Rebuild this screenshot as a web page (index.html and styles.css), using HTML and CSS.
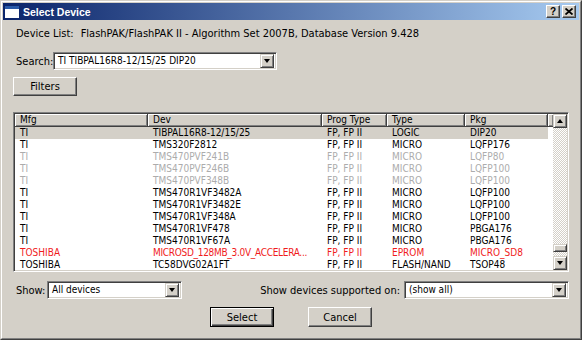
FILE: index.html
```html
<!DOCTYPE html>
<html>
<head>
<meta charset="utf-8">
<title>Select Device</title>
<link rel="stylesheet" href="styles.css">
</head>
<body>
<div class="window">
  <div class="frame">
    <div class="titlebar">
      <svg class="app-icon" width="14" height="12" viewBox="0 0 14 12">
        <rect x="0" y="0" width="14" height="12" fill="#ffffff"/>
        <rect x="0" y="0" width="14" height="3" fill="#2a5aa8"/>
      </svg>
      <span class="title">Select Device</span>
      <div class="caption-buttons">
        <div class="cap-btn help">?</div>
        <div class="cap-btn">
          <svg width="8" height="7" viewBox="0 0 8 7">
            <path d="M0.5 0.5 L7.5 6.5 M7.5 0.5 L0.5 6.5" stroke="#000" stroke-width="1.8" fill="none"/>
          </svg>
        </div>
      </div>
    </div>
    <div class="content">
      <div class="info"><span class="label">Device List:</span><span class="info-value">FlashPAK/FlashPAK II - Algorithm Set 2007B, Database Version 9.428</span></div>
      <div class="search-row">
        <span class="label search-label">Search:</span>
        <div class="combo search-combo">
          <span class="combo-text">TI TIBPAL16R8-12/15/25 DIP20</span>
          <span class="combo-btn"><i class="tri-down"></i></span>
        </div>
      </div>
      <div class="filters-row"><div class="btn filters">Filters</div></div>
      <div class="list">
        <div class="list-main">
          <div class="header">
            <div class="hcell c-mfg">Mfg</div>
            <div class="hcell c-dev">Dev</div>
            <div class="hcell c-prog">Prog Type</div>
            <div class="hcell c-type">Type</div>
            <div class="hcell c-pkg">Pkg</div>
            <div class="hcell c-fill"></div>
          </div>
          <div class="rows">
            <div class="row selected"><span class="c-mfg">TI</span><span class="c-dev">TIBPAL16R8-12/15/25</span><span class="c-prog">FP, FP II</span><span class="c-type">LOGIC</span><span class="c-pkg">DIP20</span></div>
            <div class="row"><span class="c-mfg">TI</span><span class="c-dev">TMS320F2812</span><span class="c-prog">FP, FP II</span><span class="c-type">MICRO</span><span class="c-pkg">LQFP176</span></div>
            <div class="row disabled"><span class="c-mfg">TI</span><span class="c-dev">TMS470PVF241B</span><span class="c-prog">FP, FP II</span><span class="c-type">MICRO</span><span class="c-pkg">LQFP80</span></div>
            <div class="row disabled"><span class="c-mfg">TI</span><span class="c-dev">TMS470PVF246B</span><span class="c-prog">FP, FP II</span><span class="c-type">MICRO</span><span class="c-pkg">LQFP100</span></div>
            <div class="row disabled"><span class="c-mfg">TI</span><span class="c-dev">TMS470PVF348B</span><span class="c-prog">FP, FP II</span><span class="c-type">MICRO</span><span class="c-pkg">LQFP100</span></div>
            <div class="row"><span class="c-mfg">TI</span><span class="c-dev">TMS470R1VF3482A</span><span class="c-prog">FP, FP II</span><span class="c-type">MICRO</span><span class="c-pkg">LQFP100</span></div>
            <div class="row"><span class="c-mfg">TI</span><span class="c-dev">TMS470R1VF3482E</span><span class="c-prog">FP, FP II</span><span class="c-type">MICRO</span><span class="c-pkg">LQFP100</span></div>
            <div class="row"><span class="c-mfg">TI</span><span class="c-dev">TMS470R1VF348A</span><span class="c-prog">FP, FP II</span><span class="c-type">MICRO</span><span class="c-pkg">LQFP100</span></div>
            <div class="row"><span class="c-mfg">TI</span><span class="c-dev">TMS470R1VF478</span><span class="c-prog">FP, FP II</span><span class="c-type">MICRO</span><span class="c-pkg">PBGA176</span></div>
            <div class="row"><span class="c-mfg">TI</span><span class="c-dev">TMS470R1VF67A</span><span class="c-prog">FP, FP II</span><span class="c-type">MICRO</span><span class="c-pkg">PBGA176</span></div>
            <div class="row warn"><span class="c-mfg">TOSHIBA</span><span class="c-dev tight">MICROSD_128MB_3.0V_ACCELERA...</span><span class="c-prog">FP, FP II</span><span class="c-type">EPROM</span><span class="c-pkg">MICRO_SD8</span></div>
            <div class="row last"><span class="c-mfg">TOSHIBA</span><span class="c-dev">TC58DVG02A1FT</span><span class="c-prog">FP, FP II</span><span class="c-type">FLASH/NAND</span><span class="c-pkg">TSOP48</span></div>
          </div>
        </div>
        <div class="vscroll">
          <div class="sb-btn"><i class="tri-up"></i></div>
          <div class="sb-track"><div class="sb-thumb"></div></div>
          <div class="sb-btn"><i class="tri-down"></i></div>
        </div>
      </div>
      <div class="bottom-row">
        <span class="label show-label">Show:</span>
        <div class="combo show-combo">
          <span class="combo-text">All devices</span>
          <span class="combo-btn"><i class="tri-down"></i></span>
        </div>
        <div class="supported">
          <span class="label">Show devices supported on:</span>
          <div class="combo supported-combo">
            <span class="combo-text">(show all)</span>
            <span class="combo-btn"><i class="tri-down"></i></span>
          </div>
        </div>
      </div>
      <div class="actions">
        <div class="btn default">Select</div>
        <div class="btn">Cancel</div>
      </div>
    </div>
  </div>
</div>
</body>
</html>
```

FILE: styles.css
```css
* { box-sizing: border-box; }
html, body { margin: 0; padding: 0; background: #d4d0c8; }
body {
  font-family: "DejaVu Sans Condensed", "Liberation Sans", sans-serif;
  font-size: 11px;
  color: #000;
}
.window {
  width: 582px;
  height: 340px;
  background: #d4d0c8;
  border: 1px solid;
  border-color: #d4d0c8 #404040 #404040 #d4d0c8;
}
.frame {
  height: 100%;
  border: 1px solid;
  border-color: #ffffff #808080 #808080 #ffffff;
  padding: 1px;
  display: flex;
  flex-direction: column;
}
.titlebar {
  height: 17px;
  flex: none;
  display: flex;
  align-items: center;
  padding: 0 3px 0 2px;
  background: linear-gradient(to right, #0a246a, #a6caf0);
}
.app-icon { flex: none; display: block; }
.title {
  margin-left: 4px;
  font-family: "Liberation Sans", Arial, sans-serif;
  font-weight: bold;
  font-size: 10.5px;
  color: #fff;
}
.caption-buttons {
  margin-left: auto;
  display: flex;
  gap: 2px;
}
.cap-btn {
  width: 14px;
  height: 13px;
  background: #d4d0c8;
  border: 1px solid;
  border-color: #ffffff #404040 #404040 #ffffff;
  box-shadow: inset -1px -1px #808080;
  display: flex;
  align-items: center;
  justify-content: center;
  font-family: "Liberation Sans", Arial, sans-serif;
  font-weight: bold;
  font-size: 10px;
  line-height: 1;
}
.cap-btn svg { display: block; }
.content {
  flex: 1;
  display: flex;
  flex-direction: column;
  padding: 0 10px 0 10px;
}
.label { white-space: nowrap; }
.info {
  margin-top: 7px;
  height: 13px;
  line-height: 13px;
  padding-left: 3px;
  white-space: nowrap;
}
.info-value { margin-left: 7px; }
.search-row {
  margin-top: 12px;
  display: flex;
  align-items: center;
  height: 18px;
}
.search-label { width: 40px; padding-left: 3px; }
.combo {
  height: 18px;
  background: #fff;
  border: 1px solid;
  border-color: #808080 #ffffff #ffffff #808080;
  box-shadow: inset 1px 1px #404040, inset -1px -1px #d4d0c8;
  padding: 2px 2px 2px 2px;
  display: flex;
  align-items: center;
}
.combo-text {
  flex: 1;
  padding-left: 2px;
  white-space: nowrap;
  overflow: hidden;
  line-height: 12px;
  font-size: 10px;
}
.combo-btn {
  width: 14px;
  height: 14px;
  flex: none;
  background: #d4d0c8;
  border: 1px solid;
  border-color: #d4d0c8 #404040 #404040 #d4d0c8;
  box-shadow: inset 1px 1px #fff, inset -1px -1px #808080;
  display: flex;
  align-items: center;
  justify-content: center;
}
.tri-down, .tri-up {
  display: block;
  width: 0;
  height: 0;
  border-left: 3.5px solid transparent;
  border-right: 3.5px solid transparent;
}
.tri-down { border-top: 4px solid #000; }
.tri-up { border-bottom: 4px solid #000; }
.search-combo { width: 224px; }
.filters-row { margin-top: 7px; display: flex; }
.btn {
  width: 64px;
  height: 20px;
  background: #d4d0c8;
  border: 1px solid;
  border-color: #ffffff #404040 #404040 #ffffff;
  box-shadow: inset -1px -1px #808080;
  display: flex;
  align-items: center;
  justify-content: center;
  white-space: nowrap;
}
.filters { height: 19px; }
.btn.default {
  border-color: #000;
  box-shadow: inset 1px 1px #fff, inset -1px -1px #404040, inset -2px -2px #808080;
}
.list {
  margin-top: 16px;
  height: 160px;
  background: #fff;
  border: 1px solid;
  border-color: #808080 #ffffff #ffffff #808080;
  box-shadow: inset 1px 1px #404040, inset -1px -1px #d4d0c8;
  padding: 1px;
  display: flex;
  font-size: 10px;
}
.list-main {
  flex: 1;
  display: flex;
  flex-direction: column;
  overflow: hidden;
}
.header {
  display: flex;
  height: 13px;
  flex: none;
}
.hcell {
  height: 13px;
  line-height: 12px;
  padding-left: 5px;
  background: #d4d0c8;
  border-right: 1px solid #404040;
  border-bottom: 1px solid #404040;
  box-shadow: inset 1px 1px #fff, inset -1px -1px #808080;
  white-space: nowrap;
  overflow: hidden;
  flex: none;
}
.hcell.c-fill { flex: 1; }
.c-mfg { width: 133px; }
.c-dev { width: 174px; }
.c-prog { width: 65px; }
.c-type { width: 78px; }
.c-pkg { width: 83px; }
.rows { flex: 1; overflow: hidden; }
.row {
  display: flex;
  width: 533px;
  height: 12px;
  line-height: 12px;
}
.row.last { height: 11px; line-height: 11px; }
.row span {
  flex: none;
  padding-left: 5px;
  white-space: nowrap;
  overflow: hidden;
}
.row span.tight { letter-spacing: -0.3px; }
.row.selected { background: #d4d0c8; }
.row.disabled { color: #acacac; }
.row.warn { color: #f01c1c; }
.vscroll {
  width: 14px;
  flex: none;
  display: flex;
  flex-direction: column;
  background: repeating-conic-gradient(#ffffff 0 25%, #d4d0c8 0 50%) 0 0 / 2px 2px;
}
.sb-btn {
  width: 14px;
  height: 14px;
  flex: none;
  background: #d4d0c8;
  border: 1px solid;
  border-color: #d4d0c8 #404040 #404040 #d4d0c8;
  box-shadow: inset 1px 1px #fff, inset -1px -1px #808080;
  display: flex;
  align-items: center;
  justify-content: center;
}
.sb-track {
  flex: 1;
  display: flex;
  flex-direction: column;
  justify-content: flex-end;
}
.sb-thumb {
  height: 8px;
  margin-bottom: 4px;
  background: #d4d0c8;
  border: 1px solid;
  border-color: #d4d0c8 #404040 #404040 #d4d0c8;
  box-shadow: inset 1px 1px #fff, inset -1px -1px #808080;
}
.bottom-row {
  margin-top: 9px;
  display: flex;
  align-items: center;
  height: 18px;
}
.show-label { width: 34px; padding-left: 3px; }
.show-combo { width: 135px; }
.supported {
  margin-left: auto;
  display: flex;
  align-items: center;
  gap: 4px;
}
.supported-combo { width: 165px; }
.actions {
  margin-top: 8px;
  display: flex;
  justify-content: center;
  gap: 34px;
}
```
